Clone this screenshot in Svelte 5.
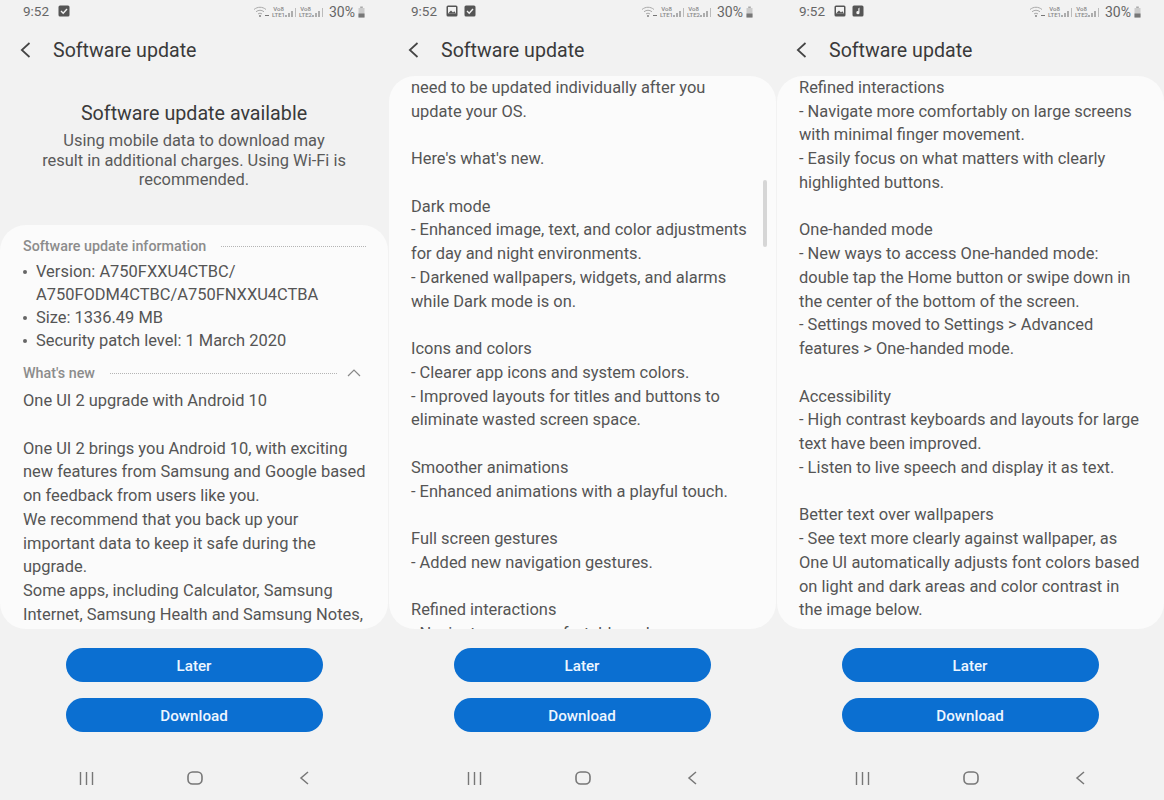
<script>
  const panels = [
    {
      icons: ["check"],
      intro: true,
      lines: [
        "One UI 2 upgrade with Android 10", "",
        "One UI 2 brings you Android 10, with exciting",
        "new features from Samsung and Google based",
        "on feedback from users like you.",
        "We recommend that you back up your",
        "important data to keep it safe during the",
        "upgrade.",
        "Some apps, including Calculator, Samsung",
        "Internet, Samsung Health and Samsung Notes,"
      ]
    },
    {
      icons: ["image", "check"],
      scrollbar: true,
      lines: [
        "need to be updated individually after you",
        "update your OS.", "",
        "Here's what's new.", "",
        "Dark mode",
        "- Enhanced image, text, and color adjustments",
        "for day and night environments.",
        "- Darkened wallpapers, widgets, and alarms",
        "while Dark mode is on.", "",
        "Icons and colors",
        "- Clearer app icons and system colors.",
        "- Improved layouts for titles and buttons to",
        "eliminate wasted screen space.", "",
        "Smoother animations",
        "- Enhanced animations with a playful touch.", "",
        "Full screen gestures",
        "- Added new navigation gestures.", "",
        "Refined interactions",
        "- Navigate more comfortably on large screens"
      ]
    },
    {
      icons: ["image", "note"],
      lines: [
        "Refined interactions",
        "- Navigate more comfortably on large screens",
        "with minimal finger movement.",
        "- Easily focus on what matters with clearly",
        "highlighted buttons.", "",
        "One-handed mode",
        "- New ways to access One-handed mode:",
        "double tap the Home button or swipe down in",
        "the center of the bottom of the screen.",
        "- Settings moved to Settings > Advanced",
        "features > One-handed mode.", "",
        "Accessibility",
        "- High contrast keyboards and layouts for large",
        "text have been improved.",
        "- Listen to live speech and display it as text.", "",
        "Better text over wallpapers",
        "- See text more clearly against wallpaper, as",
        "One UI automatically adjusts font colors based",
        "on light and dark areas and color contrast in",
        "the image below."
      ]
    }
  ];
</script>

{#snippet statusIcon(kind)}
  <svg class="sicon" viewBox="0 0 12 12" width="12" height="12">
    <rect x="0.5" y="0.5" width="11" height="11" rx="1.5" fill="#555" />
    {#if kind === "check"}
      <path d="M3 6l2.2 2.2L9 4" fill="none" stroke="#f2f2f2" stroke-width="1.4" />
    {:else if kind === "image"}
      <rect x="2" y="2" width="8" height="6.5" fill="#f2f2f2" />
      <path d="M2 8.5l3-3 2 2 1.3-1.2L10 8.5z" fill="#555" />
    {:else}
      <path d="M7.5 2.5v5.2a1.6 1.6 0 1 1-1.2-1.5V3.6z" fill="#f2f2f2" />
    {/if}
  </svg>
{/snippet}

{#snippet signal(n)}
  <span class="sim">
    <span class="volte">Vo8<br />LTE{n}</span>
    <svg viewBox="0 0 12 11" width="12" height="11">
      <path d="M1 10V8M4 10V6M7 10V4" stroke="#888" stroke-width="1.3" />
      <path d="M10.5 10V1" stroke="#bbb" stroke-width="1" />
    </svg>
  </span>
{/snippet}

<main class="screens">
  {#each panels as panel}
    <section class="phone">
      <div class="status">
        <span class="clock">9:52</span>
        {#each panel.icons as icon}
          {@render statusIcon(icon)}
        {/each}
        <span class="right">
          <svg viewBox="0 0 17 12" width="17" height="12" fill="none" stroke="#aaa" stroke-width="1">
            <path d="M1 3.500c3.500-3 8.500-3 12 0M3 5.800c2.500-2 5.500-2 8 0M5 8c1.300-1 2.700-1 4 0" />
            <circle cx="7" cy="10" r="0.9" fill="#777" stroke="none" />
            <path d="M12 9.500h4" stroke="#777" />
          </svg>
          {@render signal(1)}
          {@render signal(2)}
          <span class="pct">30%</span>
          <svg viewBox="0 0 7 12" width="7" height="12">
            <rect x="2.200" y="0.500" width="2.600" height="1.500" fill="#aaa" />
            <rect x="0.500" y="2" width="6" height="9.500" fill="#ccc" />
            <rect x="0.500" y="7.500" width="6" height="4" fill="#777" />
          </svg>
        </span>
      </div>

      <header class="appbar">
        <svg viewBox="0 0 11 16" width="11" height="16" fill="none" stroke="#444" stroke-width="1.700">
          <path d="M9.500 1L1.800 8l7.700 7" />
        </svg>
        <h1>Software update</h1>
      </header>

      {#if panel.intro}
        <div class="intro">
          <h2>Software update available</h2>
          <p>Using mobile data to download may<br />result in additional charges. Using Wi-Fi is<br />recommended.</p>
        </div>
      {/if}

      <div class="card" class:first={panel.intro}>
        {#if panel.intro}
          <div class="head">
            <span>Software update information</span>
            <i class="dots"></i>
          </div>
          <ul>
            <li>Version: A750FXXU4CTBC/<br />A750FODM4CTBC/A750FNXXU4CTBA</li>
            <li>Size: 1336.49 MB</li>
            <li>Security patch level: 1 March 2020</li>
          </ul>
          <div class="head whatsnew">
            <span>What's new</span>
            <i class="dots"></i>
            <svg viewBox="0 0 14 8" width="14" height="8" fill="none" stroke="#888" stroke-width="1.200">
              <path d="M1 7l6-6 6 6" />
            </svg>
          </div>
        {/if}
        <div class="copy">
          {#each panel.lines as line}
            <div class="line">{line}</div>
          {/each}
        </div>
        {#if panel.scrollbar}
          <span class="scrollbar"></span>
        {/if}
      </div>

      <footer>
        <button>Later</button>
        <button>Download</button>
        <nav>
          <svg viewBox="0 0 15 13" width="15" height="13" stroke="#777" stroke-width="1.400">
            <path d="M1.500 0v13M7.500 0v13M13.500 0v13" />
          </svg>
          <svg class="home" viewBox="0 0 16 14" width="16" height="14" fill="none" stroke="#777" stroke-width="1.600">
            <rect x="1" y="1" width="14" height="12" rx="4.500" />
          </svg>
          <svg viewBox="0 0 10 14" width="10" height="14" fill="none" stroke="#777" stroke-width="1.500">
            <path d="M9 1L2 7l7 6" />
          </svg>
        </nav>
      </footer>
    </section>
  {/each}
</main>

<style>
  :global(body) {
    margin: 0;
    background: #f2f2f2;
  }
  .screens {
    display: grid;
    grid-template-columns: repeat(3, 388px);
    width: 1164px;
    height: 800px;
    overflow: hidden;
    font-family: Roboto, "Liberation Sans", sans-serif;
    color: #555;
  }
  .phone {
    display: flex;
    flex-direction: column;
    height: 800px;
    min-width: 0;
  }
  .status {
    display: flex;
    align-items: center;
    gap: 6px;
    height: 22px;
    padding: 0 23px;
    font-size: 13.500px;
    color: #666;
  }
  .clock {
    margin-right: 3px;
  }
  .sicon {
    display: block;
  }
  .right {
    display: flex;
    align-items: center;
    gap: 2px;
    margin-left: auto;
    padding-top: 1px;
  }
  .sim {
    display: flex;
    align-items: flex-end;
  }
  .volte {
    font-size: 6px;
    line-height: 6px;
    font-weight: 500;
    color: #888;
    text-align: center;
  }
  .pct {
    margin: 0 1px 0 3px;
    font-size: 14px;
    color: #666;
  }
  .appbar {
    display: flex;
    align-items: center;
    gap: 22px;
    height: 54px;
    padding: 2px 0 0 20px;
    box-sizing: border-box;
  }
  h1 {
    margin: 0;
    font-size: 19.600px;
    font-weight: 400;
    color: #3a3a3a;
  }
  .intro {
    height: 149px;
    box-sizing: border-box;
    padding-top: 26px;
    text-align: center;
  }
  h2 {
    margin: 0 0 5px;
    font-size: 19.700px;
    line-height: 24px;
    font-weight: 400;
    color: #3a3a3a;
  }
  .intro p {
    margin: 0;
    font-size: 16.450px;
    line-height: 19.500px;
    color: #5a5a5a;
  }
  .card {
    position: relative;
    flex: 1;
    min-height: 0;
    overflow: hidden;
    padding: 0 22px 0 23px;
    background: #fbfbfb;
    border-radius: 26px;
    font-size: 16.460px;
  }
  .phone + .phone .card {
    margin-left: 1px;
    padding-left: 22px;
  }
  .card.first {
    padding-top: 12px;
  }
  .head {
    display: flex;
    align-items: center;
    gap: 15px;
    height: 18px;
    font-size: 14.300px;
    font-weight: 500;
    color: #8c8c8c;
  }
  .dots {
    flex: 1;
    border-top: 1.500px dotted #b4b4b4;
  }
  .whatsnew {
    margin: 12px 5px 0 0;
  }
  .whatsnew svg {
    margin-left: -5px;
  }
  ul {
    margin: 5px 0 0;
    padding: 0;
    list-style: none;
  }
  li {
    position: relative;
    padding-left: 13px;
    line-height: 23px;
    white-space: nowrap;
  }
  li::before {
    content: "";
    position: absolute;
    left: 0;
    top: 10px;
    width: 4px;
    height: 4px;
    border-radius: 50%;
    background: #666;
  }
  .copy {
    margin-top: -0.100px;
  }
  .first .copy {
    margin-top: 7px;
  }
  .line {
    height: 23.760px;
    line-height: 23.760px;
    white-space: nowrap;
  }
  .scrollbar {
    position: absolute;
    top: 104px;
    right: 9px;
    width: 4px;
    height: 67px;
    border-radius: 2px;
    background: #d6d6d6;
  }
  footer {
    display: flex;
    flex-direction: column;
    align-items: center;
    gap: 16px;
    height: 171px;
    flex: none;
    padding-top: 19px;
    box-sizing: border-box;
  }
  button {
    width: 257px;
    height: 34px;
    padding: 1px 0 0;
    border: 0;
    border-radius: 17px;
    background: #0b6fd1;
    color: #eef6ff;
    font-family: inherit;
    font-size: 15.200px;
    font-weight: 500;
  }
  nav {
    display: flex;
    align-items: center;
    justify-content: space-between;
    width: 230px;
    margin-top: 23px;
  }
  .home {
    margin-right: 3px;
  }
</style>
